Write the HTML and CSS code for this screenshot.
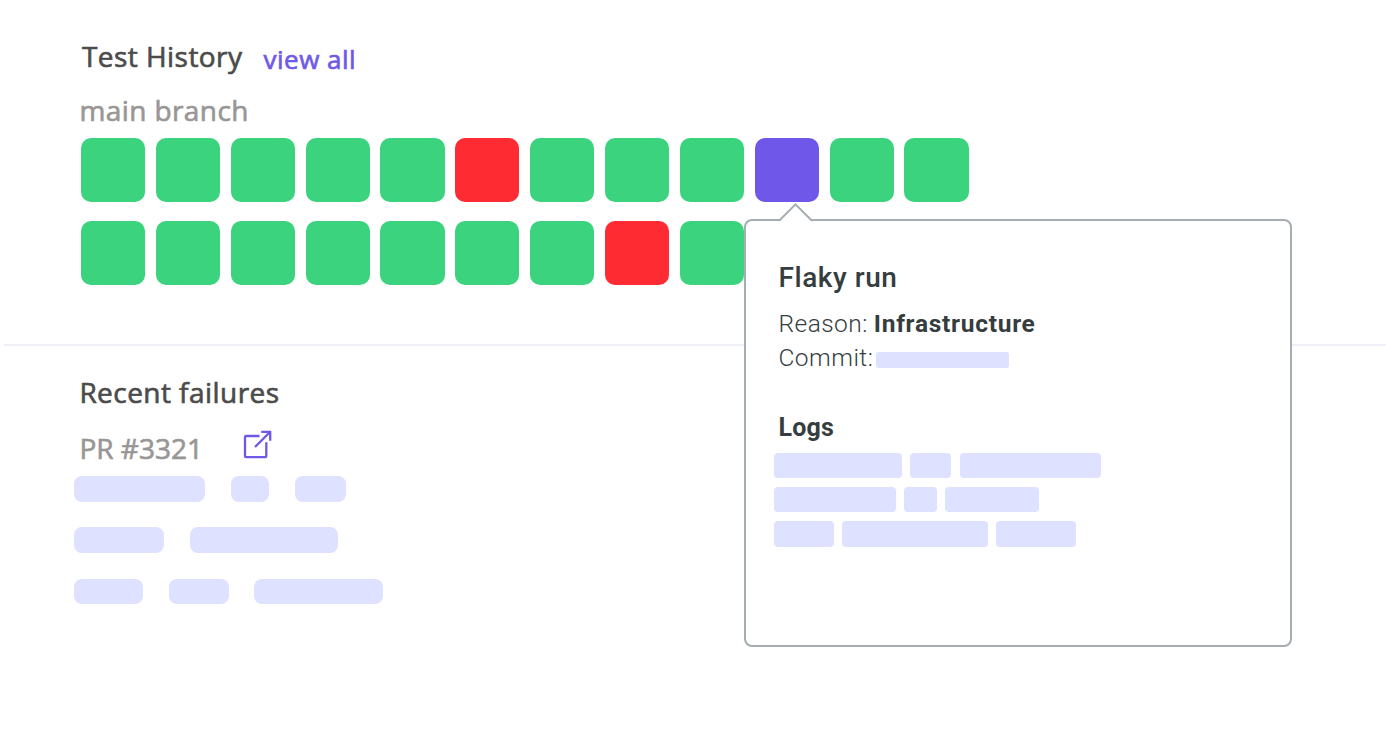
FILE: index.html
```html
<!DOCTYPE html>
<html lang="en">
<head>
<meta charset="utf-8">
<title>Test History</title>
<link rel="stylesheet" href="styles.css">
</head>
<body>
<main class="page">
  <section class="history">
    <header class="history-head">
      <h1 class="title title-history"><span>Test History</span></h1>
      <a class="view-all"><span>view all</span></a>
    </header>
    <p class="sub sub-branch"><span>main branch</span></p>
    <div class="runs">
      <i class="run"></i><i class="run"></i><i class="run"></i><i class="run"></i><i class="run"></i><i class="run failed"></i><i class="run"></i><i class="run"></i><i class="run"></i><i class="run flaky"></i><i class="run"></i><i class="run"></i>
      <i class="run"></i><i class="run"></i><i class="run"></i><i class="run"></i><i class="run"></i><i class="run"></i><i class="run"></i><i class="run failed"></i><i class="run"></i>
    </div>
  </section>
  <hr class="divider">
  <section class="failures">
    <h2 class="title title-failures"><span>Recent failures</span></h2>
    <div class="pr">
      <p class="sub sub-pr"><span>PR #3321</span></p>
      <svg class="open-icon" viewBox="0 0 30 30" fill="none" stroke="#6f58e9" stroke-width="2.3">
        <path d="M17.5 6H4.1Q3 6 3 7.1V26Q3 27.1 4.1 27.1H23.2Q24.3 27.1 24.3 26V12.3"/>
        <path d="M13 17 28 2M19.2 1.8H28.2V10.8"/>
      </svg>
    </div>
    <div class="lines">
      <div class="line"><i class="bar" style="width:130.5px"></i><i class="bar" style="width:38.5px"></i><i class="bar" style="width:51.5px"></i></div>
      <div class="line"><i class="bar" style="width:90px"></i><i class="bar" style="width:148px"></i></div>
      <div class="line"><i class="bar" style="width:68.5px"></i><i class="bar" style="width:60px"></i><i class="bar" style="width:128.5px"></i></div>
    </div>
  </section>
  <aside class="popover">
    <svg class="arrow" viewBox="0 0 36 19"><path d="M1.2 17.3 17.5 1 33.8 17.3V19H1.2Z" fill="#fff"/><path d="M.5 17.3H1.6L17.5 1.4 33.4 17.3H35" fill="none" stroke="#a5adb1" stroke-width="2"/></svg>
    <h3 class="pop-title"><span>Flaky run</span></h3>
    <p class="field"><span class="reason">Reason:</span><b class="value">Infrastructure</b></p>
    <p class="field"><span class="commit">Commit:</span><i class="hash"></i></p>
    <h4 class="logs-title"><span>Logs</span></h4>
    <div class="logs">
      <div class="log"><i class="chip" style="width:128.5px"></i><i class="chip" style="width:41px"></i><i class="chip" style="width:141.5px"></i></div>
      <div class="log"><i class="chip" style="width:122.3px"></i><i class="chip" style="width:32.5px"></i><i class="chip" style="width:94.5px"></i></div>
      <div class="log"><i class="chip" style="width:60px"></i><i class="chip" style="width:146px"></i><i class="chip" style="width:79.5px"></i></div>
    </div>
  </aside>
</main>
</body>
</html>
```
FILE: styles.css
```css
* { box-sizing: border-box; margin: 0; padding: 0; }
body { background: #fff; font-family: "Open Sans", sans-serif; }
.page { position: relative; width: 1386px; height: 734px; overflow: hidden; padding-top: 38px; white-space: nowrap; }
.history { height: 305.5px; padding-left: 81px; }
.history-head { display: flex; height: 54px; padding-left: 1px; gap: 21px; }
.title, .view-all, .sub { -webkit-text-stroke: .65px currentColor; }
.title { font-size: 28px; line-height: 36px; font-weight: 400; letter-spacing: .45px; color: #4b4b4b; }
.view-all { padding-top: 3px; font-size: 26px; line-height: 36px; letter-spacing: .5px; color: #6f58e9; }
.sub { font-size: 28px; line-height: 36px; letter-spacing: .4px; color: #999696; }
.sub-branch { height: 46px; margin-left: -1.5px; }
.runs { display: grid; grid-template-columns: repeat(12, 64.2px); gap: 19.3px 10.68px; }
.run { height: 64px; border-radius: 10px; background: #3cd37f; }
.failed { background: #ff2b33; }
.flaky { background: #6f58e9; }
.divider { height: 2px; margin-left: 4px; border: 0; background: #f0f0f8; }
.failures { padding: 28px 0 0 74.4px; }
.title-failures { padding-left: 5px; }
.pr { display: flex; margin-top: 20px; height: 46.5px; padding-left: 5px; }
.sub-pr { width: 163px; letter-spacing: 0; }
.open-icon { width: 30px; height: 30px; }
.lines { display: grid; gap: 25.7px; }
.line { display: flex; gap: 25.7px; }
.bar { height: 25.6px; border-radius: 8px; background: #dee1ff; }
.popover { position: absolute; left: 744px; top: 219px; width: 547.5px; height: 428px; padding: 37px 0 0 27.5px; border: 2px solid #a5adb1; border-radius: 8px; background: #fff; color: #363d3f; font-family: Roboto, sans-serif; }
.arrow { position: absolute; left: 32px; top: -18px; width: 36px; height: 19px; }
.pop-title { height: 48px; padding-left: 5px; font-size: 28px; line-height: 40px; font-weight: 500; letter-spacing: .55px; }
.field { display: flex; height: 34.2px; padding-left: 5px; font-size: 24.5px; line-height: 36px; font-weight: 300; letter-spacing: .45px; }
.value { margin-left: 6px; font-weight: 700; letter-spacing: .72px; }
.hash { width: 133px; height: 16px; margin: 12px 0 0 2.5px; border-radius: 3px; background: #dee1ff; }
.logs-title { height: 42px; margin-top: 36.3px; padding-left: 5px; font-size: 25px; line-height: 34px; font-weight: 700; letter-spacing: .2px; }
.logs { display: grid; gap: 8.6px; }
.log { display: flex; gap: 8.3px; }
.chip { height: 25.6px; border-radius: 4px; background: #dee1ff; }
```
